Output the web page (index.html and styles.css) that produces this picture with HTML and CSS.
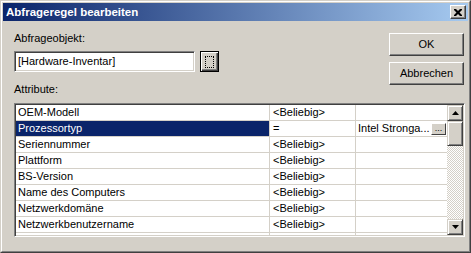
FILE: index.html
```html
<!DOCTYPE html>
<html>
<head>
<meta charset="utf-8">
<link rel="stylesheet" href="styles.css">
</head>
<body>
<div class="window">
  <div class="frame">
    <div class="titlebar">
      <span class="title">Abfrageregel bearbeiten</span>
      <span class="close"><svg width="8" height="7" viewBox="0 0 8 7"><path d="M0 0h2l2 2 2-2h2v1l-2.5 2.5L8 6v1H6L4 5 2 7H0V6l2.5-2.5L0 1z" fill="#000"/></svg></span>
    </div>
    <div class="body">
      <div class="top">
        <div class="left">
          <div class="label">Abfrageobjekt:</div>
          <div class="inputrow">
            <div class="textbox">[Hardware-Inventar]</div>
            <div class="browse"><span class="focus"></span></div>
          </div>
          <div class="label attr">Attribute:</div>
        </div>
        <div class="buttons">
          <div class="btn">OK</div>
          <div class="btn">Abbrechen</div>
        </div>
      </div>
      <div class="list">
        <div class="rows">
          <div class="row"><div class="c1">OEM-Modell</div><div class="c2">&lt;Beliebig&gt;</div><div class="c3"></div></div>
          <div class="row sel"><div class="c1">Prozessortyp</div><div class="c2">=</div><div class="c3"><span class="val">Intel Stronga...</span><span class="mini">...</span></div></div>
          <div class="row"><div class="c1">Seriennummer</div><div class="c2">&lt;Beliebig&gt;</div><div class="c3"></div></div>
          <div class="row"><div class="c1">Plattform</div><div class="c2">&lt;Beliebig&gt;</div><div class="c3"></div></div>
          <div class="row"><div class="c1">BS-Version</div><div class="c2">&lt;Beliebig&gt;</div><div class="c3"></div></div>
          <div class="row"><div class="c1">Name des Computers</div><div class="c2">&lt;Beliebig&gt;</div><div class="c3"></div></div>
          <div class="row"><div class="c1">Netzwerkdomäne</div><div class="c2">&lt;Beliebig&gt;</div><div class="c3"></div></div>
          <div class="row"><div class="c1">Netzwerkbenutzername</div><div class="c2">&lt;Beliebig&gt;</div><div class="c3"></div></div>
          <div class="row"><div class="c1"></div><div class="c2"></div><div class="c3"></div></div>
        </div>
        <div class="scrollbar">
          <div class="sbtn"><svg width="7" height="4" viewBox="0 0 7 4"><path d="M3.5 0L7 4H0z" fill="#000"/></svg></div>
          <div class="thumb"></div>
          <div class="track"></div>
          <div class="sbtn"><svg width="7" height="4" viewBox="0 0 7 4"><path d="M0 0h7L3.5 4z" fill="#000"/></svg></div>
        </div>
      </div>
    </div>
  </div>
</div>
</body>
</html>
```
FILE: styles.css
```css
* { box-sizing: border-box; }
html, body { margin: 0; padding: 0; background: #d4d0c8; }
body { font-family: "Liberation Sans", Arial, sans-serif; font-size: 11px; color: #000; }

.window {
  width: 471px; height: 253px;
  border: 1px solid; border-color: #d4d0c8 #404040 #404040 #d4d0c8;
  background: #d4d0c8;
}
.frame {
  height: 100%;
  border: 1px solid; border-color: #fff #808080 #808080 #fff;
  padding: 1px;
  display: flex; flex-direction: column;
}
.titlebar {
  height: 18px;
  background: linear-gradient(to right, #0a246a, #a6caf0);
  display: flex; align-items: center; justify-content: space-between;
  padding: 0 2px 0 3px;
}
.title { color: #fff; font-weight: bold; font-size: 11.5px; line-height: 13px; }
.close {
  width: 16px; height: 14px;
  background: #d4d0c8;
  border: 1px solid; border-color: #fff #404040 #404040 #fff;
  box-shadow: inset -1px -1px #808080;
  display: flex; align-items: center; justify-content: center;
}
.body { padding: 11px 3px 0 11px; flex: 1; display: flex; flex-direction: column; }
.top { display: flex; justify-content: space-between; }
.label { height: 13px; line-height: 13px; }
.attr { margin-top: 11px; }
.inputrow { display: flex; margin-top: 6px; align-items: flex-start; }
.textbox {
  width: 181px; height: 21px;
  background: #fff;
  border: 1px solid; border-color: #808080 #fff #fff #808080;
  box-shadow: inset 1px 1px #404040, inset -1px -1px #d4d0c8;
  padding: 3px 0 0 3px; line-height: 13px;
}
.browse {
  width: 19px; height: 21px; margin-left: 5px;
  border: 1px solid #000;
  background: #d4d0c8;
  box-shadow: inset 1px 1px #fff, inset -1px -1px #404040, inset -2px -2px #808080;
  display: flex; align-items: center; justify-content: center;
}
.focus { width: 9px; height: 12px; border: 1px dotted #000; }
.buttons { display: flex; flex-direction: column; gap: 6px; margin-top: 1px; margin-right: 1px; }
.btn {
  width: 75px; height: 23px;
  border: 1px solid; border-color: #fff #404040 #404040 #fff;
  box-shadow: inset -1px -1px #808080;
  display: flex; align-items: center; justify-content: center;
  line-height: 13px;
}
.list {
  margin-top: 7px;
  width: 451px; height: 134px;
  border: 1px solid; border-color: #808080 #fff #fff #808080;
  box-shadow: inset 1px 1px #404040, inset -1px -1px #d4d0c8;
  padding: 1px;
  display: flex; overflow: hidden;
  background: #fff;
}
.rows { flex: 1; overflow: hidden; background: #fff; }
.row { display: flex; height: 16px; border-bottom: 1px solid #d4d0c8; line-height: 15px; }
.row > div { white-space: nowrap; overflow: hidden; }
.c1 { width: 254px; padding-left: 2px; border-right: 1px solid #d4d0c8; }
.c2 { width: 86px; padding-left: 3px; border-right: 1px solid #d4d0c8; }
.c3 { flex: 1; padding-left: 2px; display: flex; justify-content: space-between; align-items: flex-start; }
.sel .c1 { background: #0a246a; color: #fff; }
.mini {
  width: 15px; height: 12px; margin-top: 2px; margin-right: 1px;
  background: #d4d0c8;
  border: 1px solid; border-color: #fff #404040 #404040 #fff;
  font-size: 9px; line-height: 8px; text-align: center;
}
.scrollbar { width: 16px; display: flex; flex-direction: column; }
.sbtn {
  height: 16px; background: #d4d0c8;
  border: 1px solid; border-color: #d4d0c8 #404040 #404040 #d4d0c8;
  box-shadow: inset 1px 1px #fff, inset -1px -1px #808080;
  display: flex; align-items: center; justify-content: center;
}
.thumb {
  height: 25px; background: #d4d0c8;
  border: 1px solid; border-color: #d4d0c8 #404040 #404040 #d4d0c8;
  box-shadow: inset 1px 1px #fff, inset -1px -1px #808080;
}
.track {
  flex: 1;
  background-image: conic-gradient(#d4d0c8 25%, #fff 0 50%, #d4d0c8 0 75%, #fff 0);
  background-size: 2px 2px;
}
```
